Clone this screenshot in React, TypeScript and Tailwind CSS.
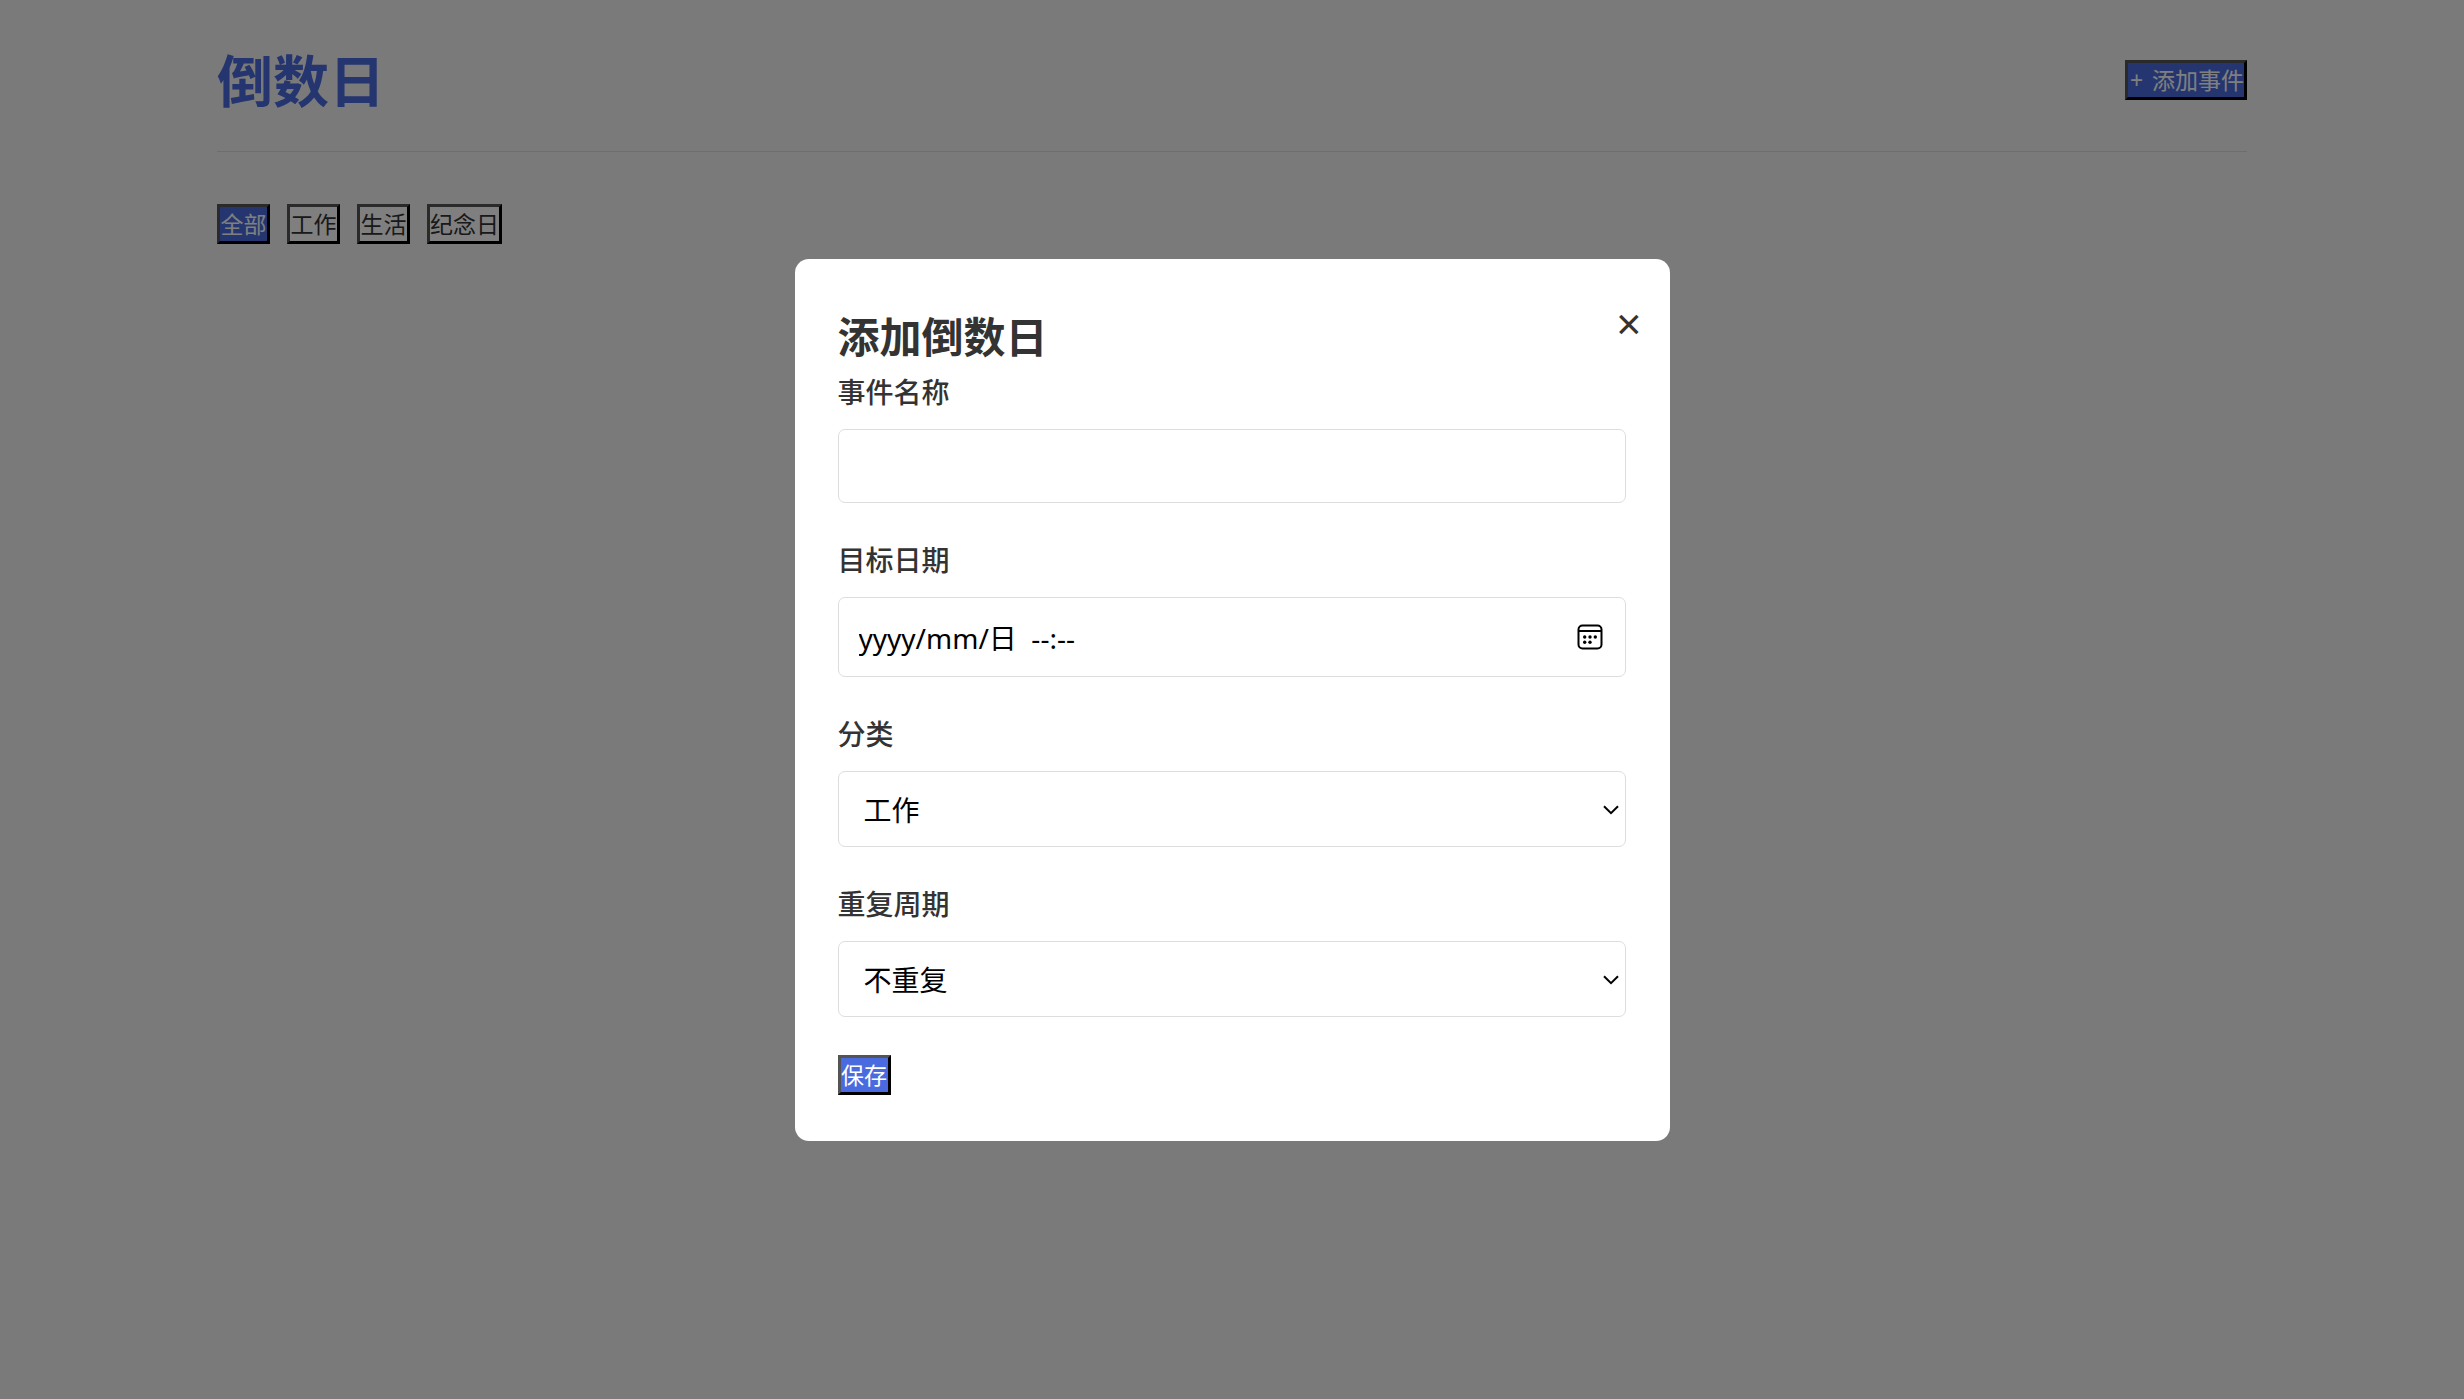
import { useState } from "react";
import type { ReactNode } from "react";

const boxedButton =
  "h-10 border-3 border-black [border-style:outset] pt-px text-[23px] leading-[33px] whitespace-nowrap";

const fieldBox =
  "w-full rounded-[7px] border border-[#dddddd] bg-white text-[28px] text-black outline-none";

const categories = ["全部", "工作", "生活", "纪念日"];

function Field({ id, label, children }: { id: string; label: string; children: ReactNode }) {
  return (
    <div className="mb-[35px]">
      <label htmlFor={id} className="mb-[14px] block text-[28px] leading-[45px] font-medium">
        {label}
      </label>
      <div className="relative">{children}</div>
    </div>
  );
}

function SelectField({ id, label, options }: { id: string; label: string; options: string[] }) {
  return (
    <Field id={id} label={label}>
      <select id={id} className={`${fieldBox} block h-[76px] appearance-none pt-[2px] pr-12 pl-[25px]`}>
        {options.map((option) => (
          <option key={option}>{option}</option>
        ))}
      </select>
      <svg
        viewBox="0 0 16 10"
        className="pointer-events-none absolute top-[34px] right-[7px] h-[10px] w-4"
        fill="none"
        stroke="black"
        strokeWidth="2"
      >
        <path d="M1 1.2 8 8.2 15 1.2" />
      </svg>
    </Field>
  );
}

export default function App() {
  const [active, setActive] = useState("全部");
  const [name, setName] = useState("");
  const [date, setDate] = useState("yyyy/mm/日\u00a0 --:--");

  return (
    <div className="min-h-screen bg-[#f5f5f5] font-['Noto_Sans','Noto_Sans_CJK_SC',sans-serif] text-[#333333]">
      <div className="mx-auto max-w-[2100px] p-[35px]">
        <header className="mb-[52px] flex items-center justify-between border-b border-[#dddddd] pb-[26px]">
          <h1 className="text-[56px] leading-[90px] font-bold text-[#4a6bdf]">倒数日</h1>
          <button
            className={`${boxedButton} flex min-w-[122px] justify-between gap-2 bg-[#4a6bdf] pl-[2px] text-white`}
          >
            <span>+</span>
            <span>添加事件</span>
          </button>
        </header>
        <nav className="flex gap-[17px]">
          {categories.map((category) => (
            <button
              key={category}
              onClick={() => setActive(category)}
              className={`${boxedButton} min-w-[53px] ${active === category ? "bg-[#4a6bdf] text-white" : "bg-white"}`}
            >
              {category}
            </button>
          ))}
        </nav>
      </div>

      <div className="fixed inset-0 flex items-center justify-center bg-black/50">
        <div
          role="dialog"
          aria-labelledby="dialog-title"
          className="relative w-full max-w-[875px] rounded-[14px] bg-white py-[44px] pr-[44px] pl-[43px]"
        >
          <button
            aria-label="关闭"
            className="absolute top-[35px] right-[28px] flex h-[58px] items-center text-[44px] leading-[58px]"
          >
            ×
          </button>
          <h2 id="dialog-title" className="text-[42px] leading-[67px] font-bold">
            添加倒数日
          </h2>
          <form onSubmit={(event) => event.preventDefault()}>
            <Field id="event-name" label="事件名称">
              <input
                id="event-name"
                type="text"
                value={name}
                onChange={(event) => setName(event.target.value)}
                className={`${fieldBox} block h-[74px] px-[18px]`}
              />
            </Field>
            <Field id="event-date" label="目标日期">
              <input
                id="event-date"
                type="text"
                value={date}
                onChange={(event) => setDate(event.target.value)}
                className={`${fieldBox} block h-20 pt-px pr-20 pl-5`}
              />
              <button type="button" aria-label="选择日期" className="absolute top-[27px] right-[23px]">
                <svg viewBox="0 0 26 26" className="h-[26px] w-[26px]" fill="none" stroke="black" strokeWidth="2">
                  <rect x="1.5" y="1.5" width="23" height="23" rx="4" />
                  <path d="M1.5 7H24.5" />
                  <g fill="black" stroke="none">
                    <circle cx="7.7" cy="13" r="1.7" />
                    <circle cx="13" cy="13" r="1.7" />
                    <circle cx="18.3" cy="13" r="1.7" />
                    <circle cx="7.7" cy="18.3" r="1.7" />
                    <circle cx="13" cy="18.3" r="1.7" />
                  </g>
                </svg>
              </button>
            </Field>
            <SelectField id="event-category" label="分类" options={["工作", "生活", "纪念日"]} />
            <SelectField id="event-repeat" label="重复周期" options={["不重复", "每周", "每月", "每年"]} />
            <div className="flex h-[45px] items-end pb-[2px]">
              <button type="submit" className={`${boxedButton} min-w-[53px] bg-[#4a6bdf] text-white`}>
                保存
              </button>
            </div>
          </form>
        </div>
      </div>
    </div>
  );
}
